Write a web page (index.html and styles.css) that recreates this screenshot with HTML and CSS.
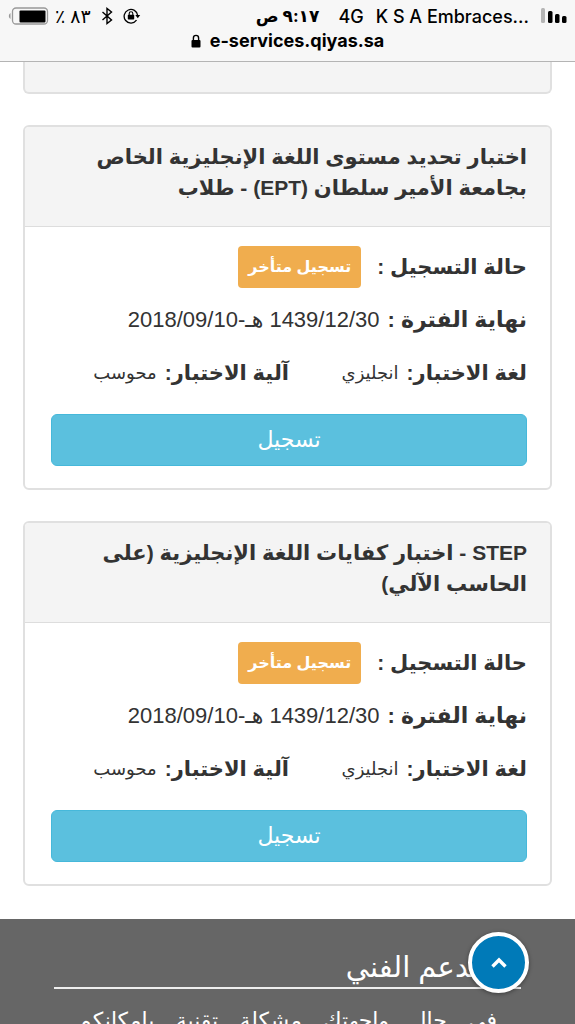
FILE: index.html
```html
<!DOCTYPE html>
<html lang="ar" dir="rtl">
<head>
<meta charset="utf-8">
<meta name="viewport" content="width=device-width, initial-scale=1">
<title>e-services.qiyas.sa</title>
<link rel="stylesheet" href="styles.css">
</head>
<body>
<header class="browser" dir="ltr">
  <div class="status">
    <div class="status-group">
      <svg class="battery" width="41" height="18" viewBox="0 0 41 18" aria-hidden="true">
        <path d="M2.500 6a3.500 3.500 0 0 0 0 6z" fill="#999"/>
        <rect x="4.500" y="1" width="35" height="16" rx="3.500" fill="none" stroke="#999" stroke-width="1.300"/>
        <rect x="11.500" y="3.500" width="26" height="12" rx="1" fill="#000"/>
      </svg>
      <span class="charge" dir="rtl">٨٣ ٪</span>
      <svg class="bluetooth" width="12" height="18" viewBox="0 0 12 18" fill="none" stroke="#000" stroke-width="1.400" aria-hidden="true">
        <path d="M1.500 5l9 8L6 16.500v-15L10.500 5l-9 8"/>
      </svg>
      <svg width="18" height="16" viewBox="0 0 18 16" aria-hidden="true">
        <path d="M13.500 12.200A6.800 6.800 0 1 1 14.700 7.500" fill="none" stroke="#000" stroke-width="1.300"/>
        <path d="M12.300 7h4.900l-2.400 3.200z"/>
        <rect x="4.800" y="6.700" width="6.400" height="4.700" rx=".7"/>
        <path d="M6.200 7V5.500a1.800 1.800 0 0 1 3.600 0V7" fill="none" stroke="#000" stroke-width="1.100"/>
      </svg>
    </div>
    <div class="clock" dir="rtl">٩:١٧ ص</div>
    <div class="status-group carrier">
      <span>4G</span>
      <span>K S A Embraces...</span>
      <svg class="signal" width="26" height="16" viewBox="0 0 26 16" aria-hidden="true">
        <rect x="0" y="0" width="4" height="15" rx="1.500" fill="#b5b5b5"/>
        <rect x="7" y="3" width="4.500" height="12" rx="1.500"/>
        <rect x="14" y="6" width="4.500" height="9" rx="1.500"/>
        <rect x="21" y="8" width="4.500" height="7" rx="1.500"/>
      </svg>
    </div>
  </div>
  <div class="address">
    <svg width="10" height="14" viewBox="0 0 10 14" aria-hidden="true">
      <rect x="0.500" y="6" width="9" height="7.500" rx="1"/>
      <path d="M2.400 6.500V4a2.600 2.600 0 0 1 5.200 0v2.500" fill="none" stroke="#000" stroke-width="1.400"/>
    </svg>
    <span>e-services.qiyas.sa</span>
  </div>
</header>

<main class="content">
  <div class="panel-end"></div>

  <section class="panel">
    <h2 class="panel-title">اختبار تحديد مستوى اللغة الإنجليزية الخاص بجامعة الأمير سلطان (EPT) - طلاب</h2>
    <div class="panel-body">
      <p class="row"><b>حالة التسجيل :</b><span class="label">تسجيل متأخر</span></p>
      <p class="row period"><b>نهاية الفترة :</b><span>1439/12/30 هـ-2018/09/10</span></p>
      <div class="columns">
        <p class="row"><b>لغة الاختبار:</b><span>انجليزي</span></p>
        <p class="row"><b>آلية الاختبار:</b><span>محوسب</span></p>
      </div>
      <button class="register" type="button">تسجيل</button>
    </div>
  </section>

  <section class="panel">
    <h2 class="panel-title">STEP - اختبار كفايات اللغة الإنجليزية (على الحاسب الآلي)</h2>
    <div class="panel-body">
      <p class="row"><b>حالة التسجيل :</b><span class="label">تسجيل متأخر</span></p>
      <p class="row period"><b>نهاية الفترة :</b><span>1439/12/30 هـ-2018/09/10</span></p>
      <div class="columns">
        <p class="row"><b>لغة الاختبار:</b><span>انجليزي</span></p>
        <p class="row"><b>آلية الاختبار:</b><span>محوسب</span></p>
      </div>
      <button class="register" type="button">تسجيل</button>
    </div>
  </section>
</main>

<footer class="footer">
  <h3 class="footer-title">الدعم الفني</h3>
  <p class="footer-text">في حال واجهتك مشكلة تقنية بإمكانكم</p>
</footer>

<button class="to-top" type="button" aria-label="إلى الأعلى">
  <svg width="16" height="12" viewBox="0 0 16 12" fill="none" stroke="#fff" stroke-width="3.400" aria-hidden="true"><path d="M1.500 9.500L8 3l6.500 6.500"/></svg>
</button>
</body>
</html>
```
FILE: styles.css
```css
* {
  box-sizing: border-box;
}

body {
  display: flex;
  flex-direction: column;
  height: 100vh;
  margin: 0;
  overflow: hidden;
  background: #fff;
  color: #333;
  font-family: "Liberation Sans", "DejaVu Sans", sans-serif;
  font-size: 20px;
}

h2, h3, p {
  margin: 0;
}

.browser {
  flex: none;
  height: 62px;
  padding: 6px 8px 0 8px;
  border-bottom: 1px solid #b4b4b4;
  background: #f7f7f7;
  color: #000;
}

.status {
  display: flex;
  align-items: center;
  justify-content: space-between;
  height: 20px;
  font-family: Inter, "DejaVu Sans", sans-serif;
  font-size: 18px;
  font-weight: 500;
  white-space: nowrap;
}

.status-group {
  display: flex;
  flex: 1 1 0;
  align-items: center;
  gap: 6px;
}

.charge {
  font-size: 19px;
}

.bluetooth {
  margin: 0 4px;
}

.carrier {
  gap: 12px;
  justify-content: flex-end;
}

.clock {
  padding: 0 12px;
  font-size: 17px;
  font-weight: bold;
}

.address {
  display: flex;
  align-items: center;
  justify-content: center;
  gap: 9px;
  height: 29px;
  font-family: Inter, sans-serif;
  font-size: 18px;
  font-weight: bold;
}

.content {
  flex: none;
  padding: 0 23px 2px;
}

.panel-end {
  height: 32px;
  margin-bottom: 31px;
  border: 2px solid #e0e0e0;
  border-top: 0;
  border-radius: 0 0 6px 6px;
  background: #f4f4f4;
}

.panel {
  margin-bottom: 31px;
  border: 2px solid #e0e0e0;
  border-radius: 6px;
  overflow: hidden;
}

.panel-title {
  padding: 14px 23px 23px;
  border-bottom: 1px solid #ddd;
  background: #f4f4f4;
  font-size: 21px;
  line-height: 31px;
}

.panel-body {
  padding: 19px 23px 22px 26px;
}

.row {
  display: flex;
  align-items: center;
  gap: 8px;
  min-height: 42px;
  margin-bottom: 11px;
  font-size: 18px;
  white-space: nowrap;
}

.row b {
  font-size: 21px;
}

.period,
.period b {
  font-size: 22px;
}

.label {
  margin-right: 8px;
  padding: 0 10px;
  border-radius: 4px;
  background: #f0ad4e;
  color: #fff;
  font-size: 16px;
  font-weight: bold;
  line-height: 42px;
}

.columns {
  display: grid;
  grid-template-columns: 1fr 1fr;
  margin-bottom: 9px;
}

.register {
  display: block;
  width: 100%;
  height: 52px;
  padding: 0;
  border: 1px solid #46b8da;
  border-radius: 6px;
  background: #5bc0de;
  color: #fff;
  font: inherit;
  font-size: 22px;
}

.footer {
  flex: 1 0 auto;
  padding: 28px 54px 0;
  background: #666;
  color: #fff;
}

.footer-title {
  padding: 0 34px;
  border-bottom: 2px solid #eee;
  font-size: 29px;
  font-weight: normal;
  line-height: 40px;
}

.footer-text {
  padding: 14px 24px 0;
  font-size: 22px;
  line-height: 36px;
  text-align: justify;
  text-align-last: justify;
}

.to-top {
  position: fixed;
  right: 46px;
  bottom: 31px;
  display: flex;
  align-items: center;
  justify-content: center;
  width: 61px;
  height: 61px;
  padding: 0;
  border: 4px solid #fff;
  border-radius: 50%;
  background: #007ab8;
  box-shadow: 0 1px 4px rgba(0, 0, 0, 0.4);
}
```
